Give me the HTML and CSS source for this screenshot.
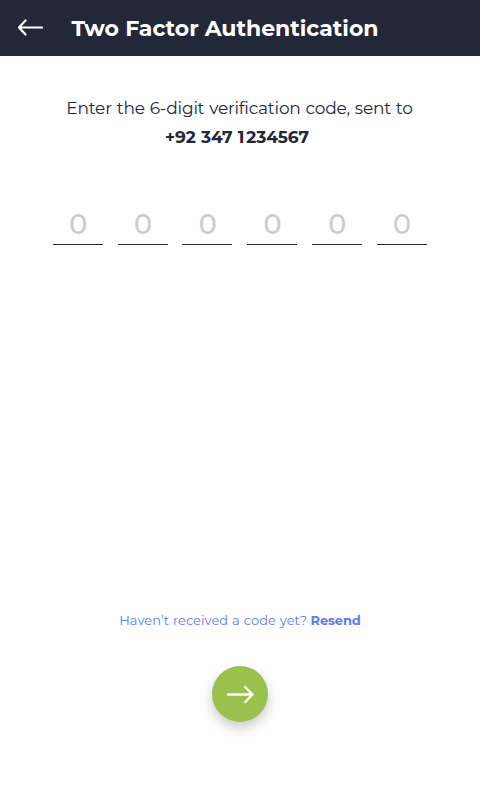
FILE: index.html
```html
<!DOCTYPE html>
<html lang="en">
<head>
<meta charset="utf-8">
<meta name="viewport" content="width=device-width, initial-scale=1">
<title>Two Factor Authentication</title>
<link rel="stylesheet" href="styles.css">
</head>
<body>
<header class="bar">
  <button class="back" aria-label="Back">
    <svg width="26" height="18" viewBox="0 0 26 18"><path d="M8.5 1.5 2 8.5l6.5 7M2 8.5h23"/></svg>
  </button>
  <h1><span class="title">Two Factor Authentication</span></h1>
</header>
<main>
  <p class="intro"><span class="message">Enter the 6-digit verification code, sent to</span><strong class="phone">+92 347 <span class="lead">1</span>234567</strong></p>
  <div class="code">
    <span>0</span><span>0</span><span>0</span><span>0</span><span>0</span><span>0</span>
  </div>
  <p class="again"><span class="question">Haven’t received a code yet?</span> <a class="resend">Resend</a></p>
  <button class="next" aria-label="Continue">
    <svg width="28" height="20" viewBox="0 0 28 20"><path d="M2 10.5h24.5M19.2 3l7.3 7.5-7.3 7.5"/></svg>
  </button>
</main>
</body>
</html>
```
FILE: styles.css
```css
* {
  box-sizing: border-box;
}

body {
  margin: 0;
  min-height: 798px;
  background: #fefefe;
  color: #232838;
  font-family: Montserrat, Inter, sans-serif;
}

button {
  padding: 0;
  border: 0;
  background: none;
}

svg {
  display: block;
  fill: none;
  stroke: #fff;
  stroke-width: 2.2;
  stroke-linecap: round;
  stroke-linejoin: round;
}

.bar {
  display: flex;
  align-items: center;
  height: 56px;
  padding-left: 17px;
  background: #232838;
  color: #fff;
}

.back {
  margin-right: 28.5px;
}

h1 {
  margin: 2px 0 0;
  font-size: 22px;
  font-weight: 700;
  line-height: 28px;
  letter-spacing: -0.04px;
  white-space: nowrap;
}

main {
  display: flex;
  flex-direction: column;
  align-items: center;
}

.intro {
  display: flex;
  flex-direction: column;
  align-items: center;
  margin: 38px 0 0;
  font-size: 17px;
  line-height: 29px;
  white-space: nowrap;
}

.message {
  margin-right: 1px;
  letter-spacing: -0.22px;
  word-spacing: 0.7px;
}

.phone {
  margin-right: 6px;
  font-size: 17px;
  font-weight: 700;
  letter-spacing: -0.1px;
  word-spacing: 0.6px;
}

.lead {
  letter-spacing: 2px;
}

.code {
  display: flex;
  justify-content: space-between;
  width: 373.8px;
  margin: 52px 0.6px 0 0;
}

.code span {
  width: 50px;
  height: 41px;
  padding-left: 1px;
  border-bottom: 1px solid #232838;
  color: #ccc;
  font-size: 27px;
  font-weight: 500;
  line-height: 42px;
  text-align: center;
}

.again {
  margin: 364px 0 0;
  color: #5b7cf5;
  font-size: 13px;
  line-height: 22px;
  white-space: nowrap;
}

.question {
  letter-spacing: 0.03px;
  word-spacing: 0.5px;
}

.resend {
  font-weight: 700;
  letter-spacing: -0.1px;
}

.next {
  display: flex;
  align-items: center;
  justify-content: center;
  width: 56px;
  height: 56px;
  margin-top: 35px;
  border-radius: 50%;
  background: #99c14d;
  box-shadow: 0 6px 12px rgba(0, 0, 0, 0.2);
}

.next svg {
  stroke-width: 2.5;
}
```
